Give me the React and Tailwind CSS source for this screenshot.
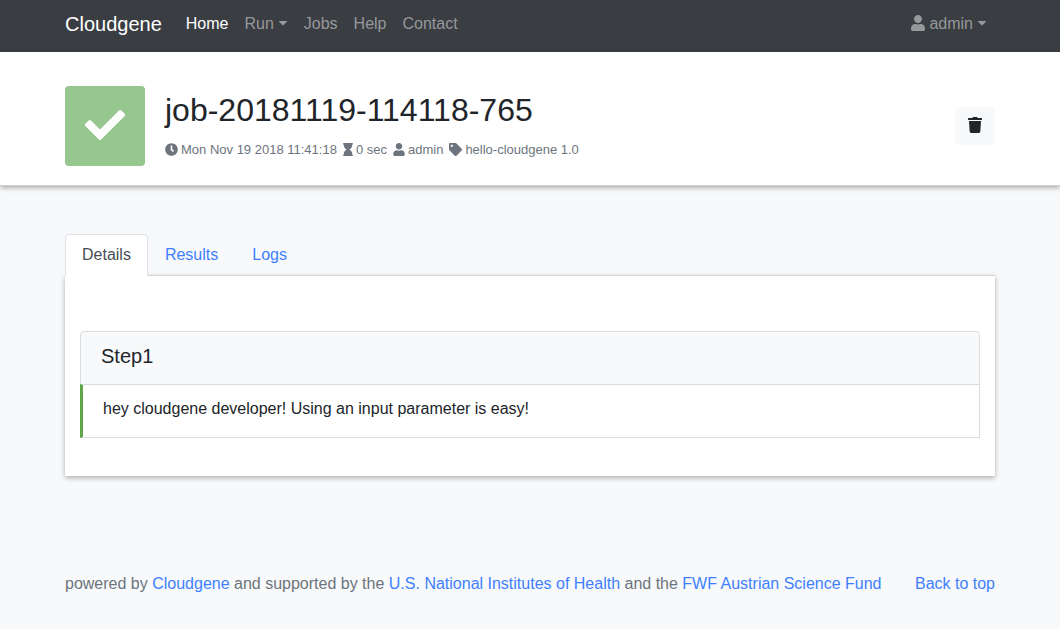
import React, { useState } from "react";
import { FaCheck, FaClock, FaHourglass, FaTag, FaTrash, FaUser } from "react-icons/fa";

function Caret() {
  return (
    <svg width="10" height="5" viewBox="0 0 10 5" className="mb-0.5 ml-1 fill-current" aria-hidden="true">
      <path d="M0.5 0h9L5 4.8z" />
    </svg>
  );
}

function Container({ className = "", children }) {
  return <div className={`mx-auto w-full max-w-[960px] px-[15px] ${className}`}>{children}</div>;
}

function NavBar() {
  const item = "px-2 py-2 text-[#96989b] hover:text-white/75";
  return (
    <nav className="bg-[#3a3d42] pt-1 pb-2">
      <Container className="flex items-center">
        <a href="#" className="mr-4 text-xl leading-[30px] text-white">Cloudgene</a>
        <a href="#home" className="px-2 py-2 text-white">Home</a>
        <button type="button" className={`flex items-center ${item}`}>Run<Caret /></button>
        <a href="#jobs" className={item}>Jobs</a>
        <a href="#help" className={item}>Help</a>
        <a href="#contact" className={item}>Contact</a>
        <button type="button" className={`ml-auto flex items-center ${item}`}>
          <FaUser className="mr-1 mb-0.5 h-4 w-[14px]" />admin<Caret />
        </button>
      </Container>
    </nav>
  );
}

function Meta({ icon, children }) {
  return <li className="flex items-center gap-[3px]">{icon}{children}</li>;
}

function JobHeader() {
  return (
    <header className="relative border-b border-[#cfcfcf] bg-white pt-[34px] pb-[19px] shadow-[0_2px_5px_rgba(0,0,0,0.3)]">
      <Container className="flex items-center">
        <div className="mr-5 flex size-20 items-center justify-center rounded bg-[#95c78f] text-white">
          <FaCheck className="mb-0.5 size-10" />
        </div>
        <div className="pb-0.5">
          <h1 className="mb-[11px] text-[32px] leading-[38px] text-[#212529]">job-20181119-114118-765</h1>
          <ul className="flex gap-[6px] text-[13px] leading-5 text-[#6c757d]">
            <Meta icon={<FaClock className="mb-px size-[13px]" />}>Mon Nov 19 2018 11:41:18</Meta>
            <Meta icon={<FaHourglass className="mb-px h-[13px] w-[10px]" />}>0 sec</Meta>
            <Meta icon={<FaUser className="mb-px h-[13px] w-[12px]" />}>admin</Meta>
            <Meta icon={<FaTag className="mb-px size-[13px]" />}>hello-cloudgene 1.0</Meta>
          </ul>
        </div>
        <button type="button" aria-label="Delete job" className="ml-auto flex h-[38px] w-10 items-center justify-center rounded bg-[#f8f9fa] text-[#212529]">
          <FaTrash className="mb-0.5 size-4" />
        </button>
      </Container>
    </header>
  );
}

function Tabs({ active, onSelect }) {
  return (
    <div role="tablist" className="relative z-10 -mb-px flex">
      {["Details", "Results", "Logs"].map((name) => (
        <button
          key={name}
          type="button"
          role="tab"
          aria-selected={name === active}
          onClick={() => onSelect(name)}
          className={
            name === active
              ? "rounded-t border border-b-0 border-[#dee2e6] bg-white px-4 pt-2 pb-[9px] text-[#495057]"
              : "border border-b-0 border-transparent px-4 pt-2 pb-[9px] text-[#4080ff]"
          }
        >
          {name}
        </button>
      ))}
    </div>
  );
}

function Step({ title, message }) {
  return (
    <section className="rounded-t">
      <h2 className="rounded-t border border-[#dadcdf] bg-[#f8f9fb] px-5 pt-3 pb-4 text-xl leading-6">{title}</h2>
      <p className="-mt-px border border-l-[3px] border-[#dadcdf] border-l-[#5fa64b] px-5 pt-3 pb-4">{message}</p>
    </section>
  );
}

export default function App() {
  const [tab, setTab] = useState("Details");
  const link = "text-[#4080ff] hover:underline";
  return (
    <div className="min-h-screen bg-[#f8f9fb] font-['Liberation_Sans',Arial,sans-serif] text-base text-[#212529]">
      <NavBar />
      <JobHeader />
      <Container className="pt-12">
        <Tabs active={tab} onSelect={setTab} />
        <main role="tabpanel" className="border-t border-[#d2d5d8] bg-white px-[15px] pt-[55px] pb-[38px] shadow-[0_2px_5px_rgba(0,0,0,0.3)]">
          {tab === "Details" && (
            <Step title="Step1" message="hey cloudgene developer! Using an input parameter is easy!" />
          )}
        </main>
        <footer className="flex justify-between pt-24 pb-8 text-[#6c757d]">
          <p>
            powered by <a href="#cloudgene" className={link}>Cloudgene</a> and supported by the{" "}
            <a href="#nih" className={link}>U.S. National Institutes of Health</a> and the{" "}
            <a href="#fwf" className={link}>FWF Austrian Science Fund</a>
          </p>
          <a href="#" className={link}>Back to top</a>
        </footer>
      </Container>
    </div>
  );
}
